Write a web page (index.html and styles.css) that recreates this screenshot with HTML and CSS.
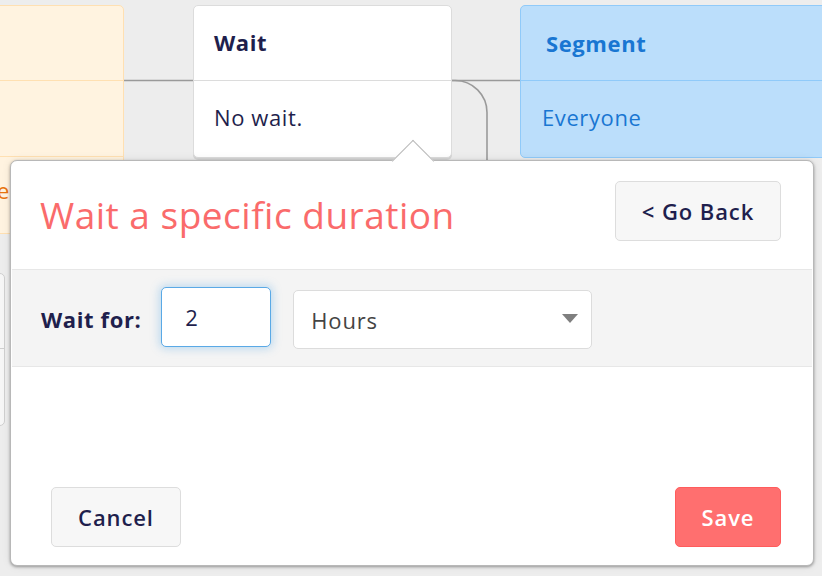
FILE: index.html
```html
<!DOCTYPE html>
<html lang="en">
<head>
<meta charset="utf-8">
<title>Wait a specific duration</title>
<link rel="stylesheet" href="styles.css">
</head>
<body>
<div class="canvas">
  <svg class="wires" width="822" height="576" viewBox="0 0 822 576">
    <path d="M120 80.5 H196" />
    <path d="M448 80.5 H524" />
    <path d="M448 80.5 H455 A32 32 0 0 1 487 112.5 V170" />
  </svg>

  <div class="node node-orange">
    <div class="node-head"></div>
    <div class="node-body"></div>
    <div class="node-foot">e</div>
  </div>

  <div class="node node-grey">
    <div class="node-head"></div>
    <div class="node-body"></div>
  </div>

  <div class="node node-wait">
    <div class="node-head">Wait</div>
    <div class="node-body">No wait.</div>
  </div>

  <div class="node node-segment">
    <div class="node-head">Segment</div>
    <div class="node-body">Everyone</div>
  </div>

  <div class="popover">
    <span class="popover-arrow"></span>
    <div class="pop-head">
      <h1 class="pop-title">Wait a specific duration</h1>
      <button class="btn btn-back">&lt; Go Back</button>
    </div>
    <div class="pop-row">
      <label class="field-label" for="amount">Wait for:</label>
      <input class="field-input" id="amount" type="text" value="2">
      <div class="field-select">
        <span>Hours</span>
        <span class="caret"></span>
      </div>
    </div>
    <div class="pop-spacer"></div>
    <div class="pop-foot">
      <button class="btn btn-cancel">Cancel</button>
      <button class="btn btn-save">Save</button>
    </div>
  </div>
</div>
</body>
</html>
```

FILE: styles.css
```css
* { box-sizing: border-box; }

html, body {
  margin: 0;
  padding: 0;
  width: 822px;
  height: 576px;
  overflow: hidden;
  background: #ededed;
  font-family: "Open Sans", "Liberation Sans", sans-serif;
  color: #1f1f4d;
}

.canvas {
  position: relative;
  width: 822px;
  height: 576px;
}

.wires {
  position: absolute;
  left: 0;
  top: 0;
}
.wires path {
  fill: none;
  stroke: #9a9a9a;
  stroke-width: 1.6;
}

/* ---------- diagram nodes ---------- */
.node {
  position: absolute;
  border: 1.5px solid #dcdcdc;
  border-radius: 5px;
  background: #fff;
  display: flex;
  flex-direction: column;
  font-size: 22px;
  letter-spacing: 0.6px;
}
.node-head {
  height: 75px;
  display: flex;
  align-items: center;
  padding: 0 20px 2px;
  font-weight: 700;
  border-bottom: 1.5px solid #dcdcdc;
}
.node-body {
  height: 76px;
  display: flex;
  align-items: center;
  padding: 0 20px 4px;
}

.node-wait {
  left: 193px;
  top: 5px;
  width: 259px;
  height: 153px;
  box-shadow: 0 2px 0 #d6d6d6;
}

.node-segment {
  left: 520px;
  top: 5px;
  width: 340px;
  height: 153px;
  background: #bbdefb;
  border-color: #90caf9;
  color: #1976d2;
}
.node-segment .node-head {
  border-bottom-color: #90caf9;
  padding-left: 25px;
  padding-bottom: 1px;
}
.node-segment .node-body { padding-left: 21px; }

.node-orange {
  left: -120px;
  top: 5px;
  width: 244px;
  height: 229px;
  background: #fff3e0;
  border-color: #ffe0b2;
  color: #e8730f;
}
.node-orange .node-head { border-bottom-color: #ffe0b2; }
.node-orange .node-body { border-bottom: 1.5px solid #ffe0b2; }
.node-orange .node-foot {
  flex: 1;
  display: flex;
  align-items: center;
  justify-content: flex-end;
  padding-right: 113px;
  font-weight: 400;
  padding-bottom: 10px;
}

.node-grey {
  left: -200px;
  top: 273px;
  width: 205px;
  height: 153px;
  background: #f6f6f6;
  border-color: #cfcfcf;
}
.node-grey .node-head { border-bottom-color: #cfcfcf; }

/* ---------- popover ---------- */
.popover {
  position: absolute;
  left: 10px;
  top: 160px;
  width: 804px;
  height: 406px;
  background: #fff;
  border: 1px solid #b8b8b8;
  border-radius: 7px;
  box-shadow: 0 1px 3px rgba(0, 0, 0, 0.35), 0 0 10px rgba(0, 0, 0, 0.08);
  display: flex;
  flex-direction: column;
}

.popover-arrow {
  position: absolute;
  left: 387px;
  top: -15px;
  width: 30px;
  height: 30px;
  background: #fff;
  border-left: 1px solid #b8b8b8;
  border-top: 1px solid #b8b8b8;
  transform: rotate(45deg);
}

.pop-head {
  position: relative;
  height: 108px;
  display: flex;
  align-items: center;
  justify-content: space-between;
  padding: 0 32px 0 29px;
}

.pop-title {
  margin: 0;
  font-size: 37px;
  font-weight: 400;
  color: #fa6b6b;
  letter-spacing: 0.5px;
  padding-bottom: 2px;
}

.btn {
  font-family: inherit;
  font-size: 22px;
  font-weight: 600;
  letter-spacing: 0.9px;
  height: 60px;
  border-radius: 5px;
  border: 1.5px solid #dddddd;
  background: #f7f7f7;
  color: #1f1f4d;
  padding: 0;
  cursor: pointer;
}
.btn-back {
  width: 166px;
  margin-bottom: 8px;
}
.btn-cancel { width: 130px; }
.btn-save {
  width: 106px;
  background: #ff6f6f;
  border-color: #ff5c5c;
  color: #fff;
}

.pop-row {
  height: 98px;
  margin: 0 1px;
  background: #f4f4f4;
  border-top: 1px solid #e7e7e7;
  border-bottom: 1px solid #e7e7e7;
  display: flex;
  align-items: center;
  padding-left: 29px;
}

.field-label {
  font-size: 22px;
  font-weight: 700;
  letter-spacing: 0.6px;
  margin-right: 20px;
  padding-top: 2px;
}

.field-input {
  width: 110px;
  height: 60px;
  margin-top: -2px;
  border: 1.5px solid #5aa9e6;
  border-radius: 5px;
  box-shadow: 0 0 8px 2px rgba(90, 169, 230, 0.35);
  background: #fff;
  font-family: inherit;
  font-size: 22px;
  color: #1f1f4d;
  padding: 0 0 0 23px;
  outline: none;
}

.field-select {
  margin-left: 22px;
  margin-top: 3px;
  width: 299px;
  height: 59px;
  border: 1.5px solid #dcdcdc;
  border-radius: 5px;
  background: #fff;
  display: flex;
  align-items: center;
  justify-content: space-between;
  padding: 0 13px 0 17px;
  font-size: 22px;
  letter-spacing: 0.8px;
  color: #444;
}
.caret {
  width: 0;
  height: 0;
  border-left: 8px solid transparent;
  border-right: 8px solid transparent;
  border-top: 9px solid #7f7f7f;
  margin-top: -2px;
}

.pop-spacer { flex: 1; }

.pop-foot {
  display: flex;
  justify-content: space-between;
  align-items: center;
  padding: 0 32px 18px 40px;
}
```
